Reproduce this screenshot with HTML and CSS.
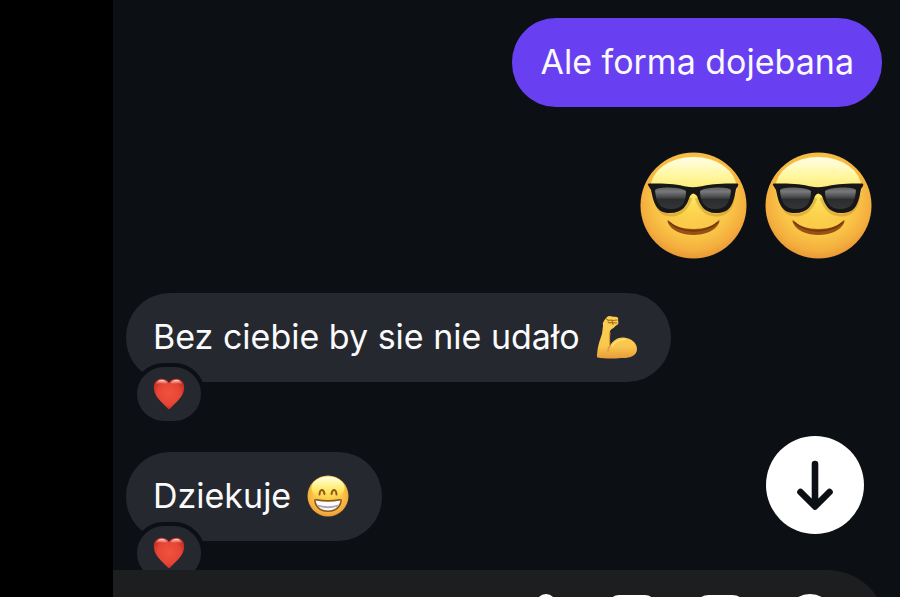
FILE: index.html
```html
<!DOCTYPE html>
<html lang="pl">
<head>
<meta charset="utf-8">
<meta name="viewport" content="width=device-width, initial-scale=1">
<title>Chat</title>
<link rel="stylesheet" href="styles.css">
</head>
<body>
<svg class="defs" aria-hidden="true">
  <defs>
    <radialGradient id="face" cx="50%" cy="43%" r="58%">
      <stop offset="0" stop-color="#fdd84f"/>
      <stop offset=".6" stop-color="#fac748"/>
      <stop offset=".85" stop-color="#f4ae3e"/>
      <stop offset="1" stop-color="#e89634"/>
    </radialGradient>
    <linearGradient id="shine" x1="0" y1="0" x2="0" y2="1">
      <stop offset="0" stop-color="#fffde6"/>
      <stop offset=".3" stop-color="#fff7a0"/>
      <stop offset=".65" stop-color="#fee964" stop-opacity=".85"/>
      <stop offset="1" stop-color="#fdd84f" stop-opacity="0"/>
    </linearGradient>
    <linearGradient id="lens" x1="0" y1="0" x2="0" y2="1">
      <stop offset="0" stop-color="#626264"/>
      <stop offset=".2" stop-color="#77787a"/>
      <stop offset=".5" stop-color="#3e3f41"/>
      <stop offset=".54" stop-color="#2b2c2d"/>
      <stop offset="1" stop-color="#343536"/>
    </linearGradient>
    <linearGradient id="arm" x1="0" y1="0" x2="0" y2="1">
      <stop offset="0" stop-color="#fbd052"/>
      <stop offset=".7" stop-color="#fac74e"/>
      <stop offset="1" stop-color="#e79c3a"/>
    </linearGradient>
    <radialGradient id="red" cx="50%" cy="48%" r="58%">
      <stop offset="0" stop-color="#f0523d"/>
      <stop offset=".65" stop-color="#e64535"/>
      <stop offset="1" stop-color="#bd2a1c"/>
    </radialGradient>
    <linearGradient id="gloss" x1="0" y1="0" x2="0" y2="1">
      <stop offset="0" stop-color="#fff" stop-opacity=".9"/>
      <stop offset="1" stop-color="#ff8d7c" stop-opacity="0"/>
    </linearGradient>
    <symbol id="cool" viewBox="0 0 107 107">
      <circle cx="53.5" cy="53.5" r="53" fill="url(#face)"/>
      <ellipse cx="53.5" cy="36" rx="43" ry="31" fill="url(#shine)"/>
      <path d="M28 68C37 80 70 80 79 68Q80 68 79 71C72 87 35 87 28 71Q27 68 28 68Z" fill="#985114"/>
      <path d="M29 70C42 82 65 82 78 70" fill="none" stroke="#713709" stroke-width="1.5"/>
      <path d="M14 42C17 59 22 63 31 63C43 63 48 54 51 46M56 46C60 56 65 63 76 63C86 63 92 58 94 42" fill="none" stroke="#a96718" stroke-opacity=".3" stroke-width="3"/>
      <path d="M8 33Q7 31 10 31.500C24 31 38 32 46 34.500Q53 36 60 34.500C69 32 84 31 97 31.500Q99 31 98 34L96 37C93 55 89 61 76 61C64 61 60 53 57 44Q53 39 50 44C47 53 43 61 30 61C18 61 14 54 11 38Z" fill="#171718"/>
      <path d="M15 38Q17 35 30 35.500Q43 36 46 39C46 52 41 57 31 57C20 57 16 51 15 38ZM60 39Q63 36 76 35.500Q89 35 91 38C90 51 86 57 75 57C65 57 60 50 60 39Z" fill="url(#lens)"/>
    </symbol>
    <symbol id="grin" viewBox="0 0 42 42">
      <circle cx="21" cy="21" r="20.500" fill="url(#face)"/>
      <ellipse cx="21" cy="13" rx="16.500" ry="11.500" fill="url(#shine)"/>
      <path d="M12.500 19.500C13 13.500 16.500 13.500 17.500 19M24.500 19C25.500 13.500 29 13.500 29.500 19.500" fill="none" stroke="#925719" stroke-width="2" stroke-linecap="round"/>
      <path d="M7 25Q7.500 23.500 9.500 24Q21 26 32.500 24Q34.500 23.500 35 25C34.500 32.500 29 37 21 37C13 37 7.500 32.500 7 25Z" fill="#8d571c"/>
      <path d="M8.500 25.500Q21 28 33.500 25.500C32 32 28 35.500 21 35.500C14 35.500 10 32 8.500 25.500Z" fill="#fcfcff"/>
      <path d="M10 29.500Q21 33 32 29.500L31 31.500Q21 35 11 31.500Z" fill="#a6a9b7"/>
    </symbol>
    <symbol id="biceps" viewBox="0 0 42 44">
      <path d="M1.500 42.500C.5 41.500 1 40 1.500 35C3 27 4 25 6 19L7 11Q6.500 7 8.500 5L11 2Q13 .5 16 1.500L21 2Q23 3 22 5L22.500 8Q22 10 20 10.500L17.500 13Q15 14 14 16C13 21 13 26 14 31C17 25 22 22 28 22.500C35 23 41 28 41 34C41 41 33 43.500 25 43C16 44 8 43.500 1.500 42.500Z" fill="url(#arm)"/>
      <path d="M10.500 4C13 7 14 4 17 5.500L21 5M12 7Q14 8.500 16 7.500L21 8M16 5.500L17 9.500" fill="none" stroke="#a36b21" stroke-width="1.100" stroke-linecap="round"/>
      <path d="M14 18C13 23 13.500 27 14 31Q12 33 12 36" fill="none" stroke="#d89332" stroke-width="1.200" stroke-linecap="round"/>
      <path d="M16 31C20 26 24 24 29 24.500" fill="none" stroke="#ffdf70" stroke-width="1.500" stroke-linecap="round"/>
    </symbol>
    <symbol id="heart" viewBox="0 0 32 32">
      <path d="M16 5C12-1.500 1 -.5 .8 9C.7 18.500 9 24 14.800 30.500Q16 32 17.200 30.500C23 24 31.300 18.500 31.200 9C31 -.5 20 -1.500 16 5Z" fill="url(#red)"/>
      <path d="M2.500 7C4 1 11 0 14.500 5C11 7 6 4 2.500 7ZM17.500 5C21 0 28 1 29.500 7C26 4 21 7 17.500 5Z" fill="url(#gloss)"/>
    </symbol>
  </defs>
</svg>
<div class="screen">
  <main class="chat">
    <section class="thread" aria-label="Wiadomości">
      <p class="bubble sent">Ale forma dojebana</p>
      <div class="stickers">
        <svg role="img" aria-label="😎"><use href="#cool"/></svg>
        <svg role="img" aria-label="😎"><use href="#cool"/></svg>
      </div>
      <div class="message">
        <p class="bubble received">Bez ciebie by sie nie udało <svg class="emoji" role="img" aria-label="💪"><use href="#biceps"/></svg></p>
        <button class="reaction" aria-label="Reakcja ❤️"><svg><use href="#heart"/></svg></button>
      </div>
      <div class="message">
        <p class="bubble received">Dziekuje <svg class="emoji" role="img" aria-label="😁"><use href="#grin"/></svg></p>
        <button class="reaction" aria-label="Reakcja ❤️"><svg><use href="#heart"/></svg></button>
      </div>
      <button class="scroll-down" aria-label="Przewiń w dół">
        <svg viewBox="0 0 98 98"><path d="M49 28V70M34.500 56L49 70.500L63.500 56" fill="none" stroke="#0c1014" stroke-width="6.600" stroke-linecap="round" stroke-linejoin="round"/></svg>
      </button>
    </section>
    <footer class="dock">
      <div class="composer">
        <button class="mic" aria-label="Nagraj"><svg viewBox="0 0 42 48"><rect x="13" y="2" width="16" height="28" rx="8"/><path d="M5 22C5 43 37 43 37 22M21 38V46"/></svg></button>
        <button aria-label="Galeria"><svg viewBox="0 0 48 48"><rect x="2" y="3" width="44" height="42" rx="9"/><path d="M3 36L17 24L39 44"/><circle cx="32" cy="17" r="4"/></svg></button>
        <button aria-label="Naklejki"><svg viewBox="0 0 48 48"><path d="M12 3H35Q45 3 45 13V29L29 46H12Q2 46 2 36V13Q2 3 12 3ZM29 46V37Q29 29 37 29H45"/></svg></button>
        <button aria-label="Dodaj"><svg viewBox="0 0 48 48"><circle cx="24" cy="24" r="22"/><path d="M24 14V34M14 24H34"/></svg></button>
      </div>
    </footer>
  </main>
</div>
</body>
</html>
```
FILE: styles.css
```css
* {
  box-sizing: border-box;
}

body {
  margin: 0;
  background: #000;
  color: #fafafc;
  font-family: Inter, "Liberation Sans", sans-serif;
}

button {
  padding: 0;
  border: 0;
  background: none;
  color: inherit;
}

svg {
  display: block;
}

.defs {
  position: absolute;
  width: 0;
  height: 0;
}

.screen {
  height: 100vh;
  padding-left: 113px;
}

.chat {
  display: flex;
  flex-direction: column;
  height: 100%;
  background: #0c1014;
}

.thread {
  position: relative;
  display: flex;
  flex: 1;
  flex-direction: column;
  align-items: flex-start;
  min-height: 0;
  overflow: hidden;
  padding: 18px 18px 0 13px;
}

.bubble {
  flex: none;
  margin: 0;
  padding: 20px 28px 21px;
  border-radius: 44px;
  font-size: 34px;
  line-height: 48px;
  white-space: nowrap;
}

.sent {
  align-self: flex-end;
  background: #6840f2;
}

.received {
  display: flex;
  align-items: center;
  gap: 16px;
  padding: 20px 33px 21px 27px;
  background: #25282e;
}

.stickers {
  display: flex;
  align-self: flex-end;
  gap: 18px;
  margin: 45px 10px 34px 0;
}

.stickers svg {
  width: 107px;
  height: 107px;
}

.emoji {
  width: 42px;
  height: 44px;
}

.message {
  position: relative;
  flex: none;
  margin-bottom: 70px;
}

.reaction {
  position: absolute;
  bottom: -43px;
  left: 7px;
  display: grid;
  place-items: center;
  width: 72px;
  height: 62px;
  border: 4px solid #0c1014;
  border-radius: 31px;
  background: #25282e;
}

.reaction svg {
  width: 32px;
  height: 32px;
}

.scroll-down {
  position: absolute;
  right: 36px;
  bottom: 36px;
  width: 98px;
  height: 98px;
  border-radius: 50%;
  background: #fff;
}

.dock {
  flex: none;
  height: 27px;
  overflow: hidden;
}

.composer {
  display: flex;
  justify-content: flex-end;
  gap: 41px;
  height: 120px;
  margin-right: 13px;
  padding: 24px 53px 0 0;
  border-radius: 0 60px 60px 0;
  background: #1d1e20;
}

.composer button,
.composer svg {
  width: 48px;
  height: 48px;
}

.composer .mic,
.composer .mic svg {
  width: 42px;
}

.composer svg {
  fill: none;
  stroke: #fff;
  stroke-width: 4px;
}
```
